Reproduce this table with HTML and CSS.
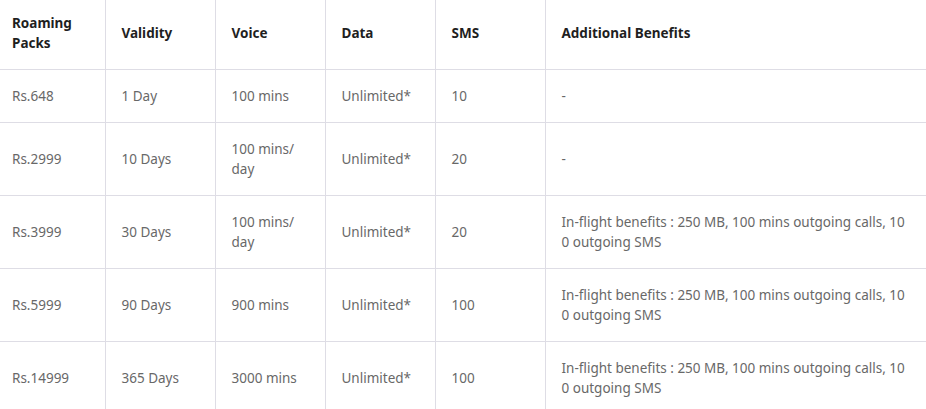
FILE: index.html
```html
<!DOCTYPE html>
<html>
<head>
<meta charset="utf-8">
<link rel="stylesheet" href="styles.css">
</head>
<body>
<table class="packs">
  <colgroup>
    <col class="c1"><col class="c2"><col class="c2"><col class="c2"><col class="c2"><col class="c6">
  </colgroup>
  <thead>
    <tr>
      <th>Roaming Packs</th>
      <th>Validity</th>
      <th>Voice</th>
      <th>Data</th>
      <th>SMS</th>
      <th>Additional Benefits</th>
    </tr>
  </thead>
  <tbody>
    <tr><td>Rs.648</td><td>1 Day</td><td>100 mins</td><td>Unlimited*</td><td>10</td><td class="benefit">-</td></tr>
    <tr><td>Rs.2999</td><td>10 Days</td><td>100 mins/ day</td><td>Unlimited*</td><td>20</td><td class="benefit">-</td></tr>
    <tr><td>Rs.3999</td><td>30 Days</td><td>100 mins/ day</td><td>Unlimited*</td><td>20</td><td class="benefit">In-flight benefits : 250 MB, 100 mins outgoing calls, 100 outgoing SMS</td></tr>
    <tr><td>Rs.5999</td><td>90 Days</td><td>900 mins</td><td>Unlimited*</td><td>100</td><td class="benefit">In-flight benefits : 250 MB, 100 mins outgoing calls, 100 outgoing SMS</td></tr>
    <tr><td>Rs.14999</td><td>365 Days</td><td>3000 mins</td><td>Unlimited*</td><td>100</td><td class="benefit">In-flight benefits : 250 MB, 100 mins outgoing calls, 100 outgoing SMS</td></tr>
  </tbody>
</table>
</body>
</html>
```
FILE: styles.css
```css
html, body {
  margin: 0;
  padding: 0;
  background: #fff;
}
.packs {
  width: 926px;
  border-collapse: collapse;
  table-layout: fixed;
  font-family: "Noto Sans", "Open Sans", sans-serif;
  font-size: 13.5px;
  line-height: 20px;
}
.c1 { width: 105px; }
.c2 { width: 110px; }
.c6 { width: 381px; }
.packs th,
.packs td {
  text-align: left;
  vertical-align: middle;
  padding: 16px 16px;
  border-left: 1px solid #dedde5;
  border-bottom: 1px solid #dedde5;
}
.packs th:first-child,
.packs td:first-child {
  border-left: none;
  padding-left: 12px;
}
.packs th {
  color: #1f1f1f;
  font-weight: 700;
  padding-top: 13px;
  padding-bottom: 16px;
}
.packs td {
  color: #686868;
}
.packs .benefit {
  word-break: break-all;
}
```
